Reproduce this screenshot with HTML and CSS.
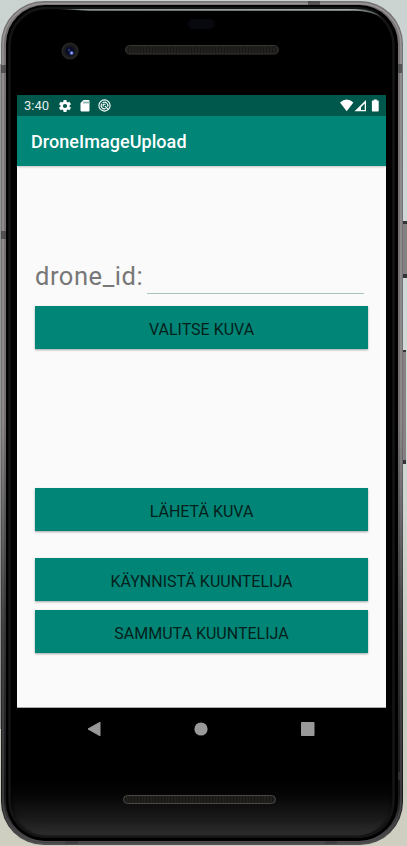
FILE: index.html
```html
<!DOCTYPE html>
<html lang="fi">
<head>
<meta charset="utf-8">
<title>DroneImageUpload</title>
<link rel="stylesheet" href="styles.css">
</head>
<body>
<svg class="shell" width="407" height="846" viewBox="0 0 407 846" aria-hidden="true">
  <defs>
    <linearGradient id="rim" x1="0" y1="0" x2="0" y2="1">
      <stop offset="0" stop-color="#777373"/><stop offset=".5" stop-color="#747071"/><stop offset=".72" stop-color="#3a393a"/><stop offset=".94" stop-color="#171718"/><stop offset="1" stop-color="#555254"/>
    </linearGradient>
    <linearGradient id="rimLight" x1="0" y1="0" x2="0" y2="1">
      <stop offset="0" stop-color="#999697"/><stop offset=".5" stop-color="#929092"/><stop offset=".75" stop-color="#454446"/><stop offset="1" stop-color="#454446"/>
    </linearGradient>
    <linearGradient id="chin" x1="0" y1="0" x2="0" y2="1">
      <stop offset="0" stop-color="#000"/><stop offset=".25" stop-color="#050505"/><stop offset=".65" stop-color="#191919"/><stop offset="1" stop-color="#303030"/>
    </linearGradient>
    <linearGradient id="shine" gradientUnits="userSpaceOnUse" x1="55" y1="0" x2="382" y2="0">
      <stop offset="0" stop-color="#889392" stop-opacity="0"/><stop offset=".08" stop-color="#889392"/><stop offset=".9" stop-color="#a0acab"/><stop offset="1" stop-color="#889392" stop-opacity=".5"/>
    </linearGradient>
    <pattern id="mesh" width="3" height="8" patternUnits="userSpaceOnUse">
      <rect width="3" height="8" fill="#181716"/><path d="M1 0v8" stroke="#2a2824"/>
    </pattern>
    <filter id="soft" x="-20%" y="-20%" width="140%" height="140%" color-interpolation-filters="sRGB"><feGaussianBlur stdDeviation="2.5"/></filter>
    <clipPath id="glassClip"><rect x="7" y="6" width="390" height="832" rx="38"/></clipPath>
    <clipPath id="chinClip"><rect x="11" y="700" width="382" height="138" rx="34"/></clipPath>
  </defs>
  <path d="M402 221h5v57h-5zM402 350h4v114h-4z" fill="#858183"/>
  <path d="M403 221h4v3h-4zM403 274h4v4h-4zM402 350h4v2h-4zM402 460h4v4h-4z" fill="#343335"/>
  <path d="M0 64h3v665H0z" fill="#777" opacity=".7"/>
  <rect x="1" y="1" width="402" height="844" rx="43" fill="url(#rim)"/>
  <rect x="3" y="3.500" width="398" height="839" rx="41" fill="none" stroke="url(#rimLight)" stroke-width="1.500"/>
  <path d="M1 65h5v8H1zM1 231h5v8H1zM397 64h5v9h-5zM308 1h12v4h-12zM397 772h5v8h-5zM65 840h13v4H65zM325 840h12v4h-12z" fill="#3c3b3c" opacity=".7"/>
  <rect x="6" y="5" width="392" height="836" rx="39" fill="#000"/>
  <g clip-path="url(#glassClip)">
    <g filter="url(#soft)"><rect x="11" y="780" width="382" height="58" fill="url(#chin)" clip-path="url(#chinClip)"/></g>
    <rect x="9.500" y="8" width="384" height="829" rx="37" fill="none" stroke="#151515" stroke-width="2.500"/>
  </g>
  <path d="M55 9H356Q374 9.500 382 18Q372 11 354 10.800H90z" fill="url(#shine)"/>
  <rect x="188" y="19" width="27" height="10" rx="5" fill="#08090e"/>
  <circle cx="70" cy="51" r="7.700" fill="#1a1a1b" stroke="#252525" stroke-width="1.800"/>
  <circle cx="70" cy="51" r="4.500" fill="#090d27"/>
  <circle cx="71.500" cy="53" r="2" fill="#4758bd"/><circle cx="71.700" cy="53" r="1" fill="#a1b5ff"/><circle cx="69" cy="50" r="1" fill="#35499c"/>
  <rect x="125.500" y="45.500" width="153" height="8.500" rx="4.200" fill="url(#mesh)" stroke="#373633"/>
  <rect x="123.500" y="795.500" width="152" height="8" rx="4" fill="url(#mesh)" stroke="#484743"/>
</svg>

<div class="screen">
  <header>
    <div class="status">
      <span class="time">3:40</span>
      <svg class="gear" width="12" height="12" viewBox="2 2 20 20"><path fill="currentColor" d="M19.430 12.980c.04-.32.07-.64.07-.98s-.03-.66-.07-.98l2.110-1.650c.19-.15.24-.42.12-.64l-2-3.460c-.12-.22-.39-.3-.61-.22l-2.490 1c-.52-.4-1.080-.73-1.690-.98l-.38-2.650A.49.49 0 0 0 14 2h-4c-.25 0-.46.18-.49.42l-.38 2.650c-.61.25-1.170.59-1.690.98l-2.490-1c-.23-.09-.49 0-.61.22l-2 3.460c-.13.22-.07.49.12.64l2.110 1.650c-.04.32-.07.65-.07.98s.03.66.07.98l-2.110 1.650c-.19.15-.24.42-.12.64l2 3.460c.12.22.39.3.61.22l2.490-1c.52.4 1.080.73 1.690.98l.38 2.650c.03.24.24.42.49.42h4c.25 0 .46-.18.49-.42l.38-2.650c.61-.25 1.170-.59 1.690-.98l2.490 1c.23.09.49 0 .61-.22l2-3.460c.12-.22.07-.49-.12-.64zM12 15.500a3.500 3.500 0 1 1 0-7 3.500 3.500 0 0 1 0 7z"/></svg>
      <svg class="card" width="10" height="12" viewBox="0 0 10 12"><path fill="currentColor" d="M3.500 0H8.500Q9.500 0 9.500 1V10.500Q9.500 11.500 8.500 11.500H1.500Q.5 11.500 .5 10.500V3z"/><path d="M4 1.500v2M6 1.500v2M8 1.500v2" stroke="#00574b" stroke-width=".8"/></svg>
      <svg class="app" width="13" height="13" viewBox="0 0 13 13" fill="none" stroke="currentColor"><circle cx="6.500" cy="6.500" r="5.600" stroke-width="1.100"/><path d="M3.700 4.600A3.400 3.400 0 0 0 7.800 9.600M4.600 3.700A3.400 3.400 0 0 1 9.600 7.800M6.800 6.800L10.500 10.500" stroke-width="1.100"/><path d="M5.200 7.600V5.200H7.600" stroke-width="1.100"/></svg>
      <svg class="signals" width="40" height="13" viewBox="0 0 40 13"><path fill="currentColor" d="M0 3.500Q6.700-2.500 13.400 3.500L6.700 12.300z"/><path fill="currentColor" fill-rule="evenodd" d="M26 1V12.300H14.500zM24.700 4.500L21 8.200V11H24.700z"/><path fill="currentColor" d="M33.800.5h3v1h1.200q.7 0 .7.700v9.600q0 .7-.7.700h-5.400q-.7 0-.7-.7V2.200q0-.7.700-.7h1.200z"/></svg>
    </div>
    <h1>DroneImageUpload</h1>
  </header>
  <main>
    <label class="field"><span>drone_id:</span><input type="text"></label>
    <button class="choose">VALITSE KUVA</button>
    <button class="send">LÄHETÄ KUVA</button>
    <button class="start">KÄYNNISTÄ KUUNTELIJA</button>
    <button class="stop">SAMMUTA KUUNTELIJA</button>
  </main>
  <nav>
    <svg width="14" height="16" viewBox="0 0 14 16"><path d="M13 1.200V14.800L1 8z" fill="#999" stroke="#999" stroke-linejoin="round"/></svg>
    <svg width="14" height="14" viewBox="0 0 14 14"><circle cx="7" cy="7" r="6.600" fill="#999"/></svg>
    <svg width="14" height="14" viewBox="0 0 14 14"><rect width="13.500" height="14" rx=".8" fill="#999"/></svg>
  </nav>
</div>
</body>
</html>
```
FILE: styles.css
```css
* { box-sizing: border-box; }
body {
  margin: 0;
  width: 407px;
  height: 846px;
  overflow: hidden;
  font-family: Roboto, sans-serif;
  background: linear-gradient(#cbd3d1, #cdd8d7 25%, #d2dad6 50%, #c7cbc0 80%, #cfcfc1);
}
.shell { position: absolute; top: 0; left: 0; }
.screen {
  position: relative;
  width: 369px;
  margin: 95px 0 0 17px;
}
header {
  position: relative;
  height: 71px;
  background: #008577;
  color: #fff;
  box-shadow: 0 1px 2px rgba(0, 0, 0, .22);
}
.status {
  height: 21px;
  display: flex;
  align-items: center;
  padding: 0 6px 0 7px;
  background: #00574b;
}
.time { width: 34.5px; font-size: 13px; line-height: 21px; color: #e5efed; }
.card { margin-left: 9px; }
.app { margin-left: 8px; }
.signals { margin-left: auto; }
h1 { margin: 0; padding-left: 14px; font-size: 18px; font-weight: 500; line-height: 52px; letter-spacing: .06px; }
main {
  display: flex;
  flex-direction: column;
  height: 542px;
  padding: 93px 18px 0;
  background: #fafafa;
  border-bottom: 1px solid #aaa;
}
.field { display: flex; height: 35px; margin-bottom: 12px; color: #777; font-size: 25.5px; line-height: 35px; }
.field span { width: 112px; letter-spacing: .55px; white-space: nowrap; }
input {
  width: 217px;
  height: 35px;
  border: 0;
  padding: 0;
  background: transparent;
  border-bottom: 1px solid #a7c5bd;
  outline: 0;
}
button {
  flex: none;
  width: 333px;
  height: 43px;
  border: 0;
  padding: 3px 0 0;
  background: #008577;
  color: #03211a;
  font-family: Roboto, sans-serif;
  font-size: 16px;
  box-shadow: 0 1px 2px rgba(0, 0, 0, .35);
}
.send { margin-top: 139px; }
.start { margin-top: 27px; }
.stop { margin-top: 9px; }
nav { display: flex; align-items: center; gap: 93px; height: 42px; padding-left: 70px; }
```
